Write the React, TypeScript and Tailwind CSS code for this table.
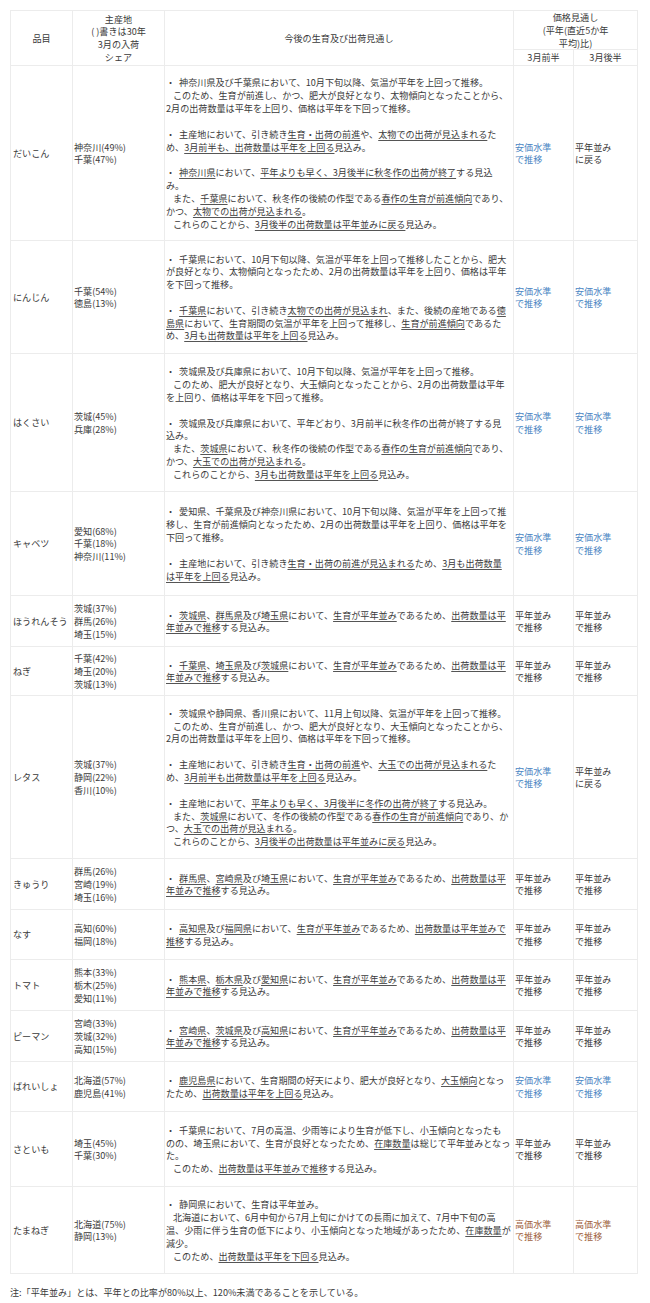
import React from "react";

type Price = "cheap" | "normal" | "back" | "high";

interface Row {
  name: string;
  height: string;
  areas: string[];
  outlook: string[];
  early: Price;
  late: Price;
}

const priceText: Record<Price, { lines: string[]; color: string }> = {
  cheap: { lines: ["安価水準", "で推移"], color: "text-[#4a86c3]" },
  normal: { lines: ["平年並み", "で推移"], color: "text-[#3a3a3a]" },
  back: { lines: ["平年並み", "に戻る"], color: "text-[#3a3a3a]" },
  high: { lines: ["高価水準", "で推移"], color: "text-[#a0623e]" },
};

// "{...}" = underlined, ">" = indented line, "" = blank line
const rows: Row[] = [
  {
    name: "だいこん",
    height: "h-[175px]",
    areas: ["神奈川(49%)", "千葉(47%)"],
    outlook: [
      "・ 神奈川県及び千葉県において、10月下旬以降、気温が平年を上回って推移。",
      ">このため、生育が前進し、かつ、肥大が良好となり、太物傾向となったことから、",
      "2月の出荷数量は平年を上回り、価格は平年を下回って推移。",
      "",
      "・ 主産地において、引き続き{生育・出荷の前進}や、{太物での出荷が見込まれる}た",
      "め、{3月前半も、出荷数量は平年を上回る}見込み。",
      "",
      "・ {神奈川県}において、{平年よりも早く、3月後半に秋冬作の出荷が終了}する見込",
      "み。",
      ">また、{千葉県}において、秋冬作の後続の作型である{春作の生育が前進傾向}であり、",
      "かつ、{太物での出荷が見込まれる}。",
      ">これらのことから、{3月後半の出荷数量は平年並みに戻る}見込み。",
    ],
    early: "cheap",
    late: "back",
  },
  {
    name: "にんじん",
    height: "h-[113px]",
    areas: ["千葉(54%)", "徳島(13%)"],
    outlook: [
      "・ 千葉県において、10月下旬以降、気温が平年を上回って推移したことから、肥大",
      "が良好となり、太物傾向となったため、2月の出荷数量は平年を上回り、価格は平年",
      "を下回って推移。",
      "",
      "・ {千葉県}において、引き続き{太物での出荷が見込まれ}、また、後続の産地である{徳}",
      "{島県}において、生育期間の気温が平年を上回って推移し、{生育が前進傾向}であるた",
      "め、{3月も出荷数量は平年を上回る}見込み。",
    ],
    early: "cheap",
    late: "cheap",
  },
  {
    name: "はくさい",
    height: "h-[138px]",
    areas: ["茨城(45%)", "兵庫(28%)"],
    outlook: [
      "・ 茨城県及び兵庫県において、10月下旬以降、気温が平年を上回って推移。",
      ">このため、肥大が良好となり、大玉傾向となったことから、2月の出荷数量は平年",
      "を上回り、価格は平年を下回って推移。",
      "",
      "・ 茨城県及び兵庫県において、平年どおり、3月前半に秋冬作の出荷が終了する見",
      "込み。",
      ">また、{茨城県}において、秋冬作の後続の作型である{春作の生育が前進傾向}であり、",
      "かつ、{大玉での出荷が見込まれる}。",
      ">これらのことから、{3月も出荷数量は平年を上回る}見込み。",
    ],
    early: "cheap",
    late: "cheap",
  },
  {
    name: "キャベツ",
    height: "h-[104px]",
    areas: ["愛知(68%)", "千葉(18%)", "神奈川(11%)"],
    outlook: [
      "・ 愛知県、千葉県及び神奈川県において、10月下旬以降、気温が平年を上回って推",
      "移し、生育が前進傾向となったため、2月の出荷数量は平年を上回り、価格は平年を",
      "下回って推移。",
      "",
      "・ 主産地において、引き続き{生育・出荷の前進が見込まれる}ため、{3月も出荷数量}",
      "{は平年を上回る}見込み。",
    ],
    early: "cheap",
    late: "cheap",
  },
  {
    name: "ほうれんそう",
    height: "h-[51px]",
    areas: ["茨城(37%)", "群馬(26%)", "埼玉(15%)"],
    outlook: [
      "・ {茨城県}、{群馬県}及び{埼玉県}において、{生育が平年並み}であるため、{出荷数量は平}",
      "{年並みで推移}する見込み。",
    ],
    early: "normal",
    late: "normal",
  },
  {
    name: "ねぎ",
    height: "h-[49px]",
    areas: ["千葉(42%)", "埼玉(20%)", "茨城(13%)"],
    outlook: [
      "・ {千葉県}、{埼玉県}及び{茨城県}において、{生育が平年並み}であるため、{出荷数量は平}",
      "{年並みで推移}する見込み。",
    ],
    early: "normal",
    late: "normal",
  },
  {
    name: "レタス",
    height: "h-[163px]",
    areas: ["茨城(37%)", "静岡(22%)", "香川(10%)"],
    outlook: [
      "・ 茨城県や静岡県、香川県において、11月上旬以降、気温が平年を上回って推移。",
      ">このため、生育が前進し、かつ、肥大が良好となり、大玉傾向となったことから、",
      "2月の出荷数量は平年を上回り、価格は平年を下回って推移。",
      "",
      "・ 主産地において、引き続き{生育・出荷の前進}や、{大玉での出荷が見込まれる}た",
      "め、{3月前半も出荷数量は平年を上回る}見込み。",
      "",
      "・ 主産地において、{平年よりも早く、3月後半に冬作の出荷が終了}する見込み。",
      ">また、{茨城県}において、冬作の後続の作型である{春作の生育が前進傾向}であり、か",
      "つ、{大玉での出荷が見込まれる}。",
      ">これらのことから、{3月後半の出荷数量は平年並みに戻る}見込み。",
    ],
    early: "cheap",
    late: "back",
  },
  {
    name: "きゅうり",
    height: "h-[51px]",
    areas: ["群馬(26%)", "宮崎(19%)", "埼玉(16%)"],
    outlook: [
      "・ {群馬県}、{宮崎県}及び{埼玉県}において、{生育が平年並み}であるため、{出荷数量は平}",
      "{年並みで推移}する見込み。",
    ],
    early: "normal",
    late: "normal",
  },
  {
    name: "なす",
    height: "h-[50px]",
    areas: ["高知(60%)", "福岡(18%)"],
    outlook: [
      "・ {高知県}及び{福岡県}において、{生育が平年並み}であるため、{出荷数量は平年並みで}",
      "{推移}する見込み。",
    ],
    early: "normal",
    late: "normal",
  },
  {
    name: "トマト",
    height: "h-[51px]",
    areas: ["熊本(33%)", "栃木(25%)", "愛知(11%)"],
    outlook: [
      "・ {熊本県}、{栃木県}及び{愛知県}において、{生育が平年並み}であるため、{出荷数量は平}",
      "{年並みで推移}する見込み。",
    ],
    early: "normal",
    late: "normal",
  },
  {
    name: "ピーマン",
    height: "h-[51px]",
    areas: ["宮崎(33%)", "茨城(32%)", "高知(15%)"],
    outlook: [
      "・ {宮崎県}、{茨城県}及び{高知県}において、{生育が平年並み}であるため、{出荷数量は平}",
      "{年並みで推移}する見込み。",
    ],
    early: "normal",
    late: "normal",
  },
  {
    name: "ばれいしょ",
    height: "h-[50px]",
    areas: ["北海道(57%)", "鹿児島(41%)"],
    outlook: [
      "・ {鹿児島県}において、生育期間の好天により、肥大が良好となり、{大玉傾向}となっ",
      "たため、{出荷数量は平年を上回る}見込み。",
    ],
    early: "cheap",
    late: "cheap",
  },
  {
    name: "さといも",
    height: "h-[75px]",
    areas: ["埼玉(45%)", "千葉(30%)"],
    outlook: [
      "・ 千葉県において、7月の高温、少雨等により生育が低下し、小玉傾向となったも",
      "のの、埼玉県において、生育が良好となったため、{在庫数量}は総じて平年並みとなっ",
      "た。",
      ">このため、{出荷数量は平年並みで推移}する見込み。",
    ],
    early: "normal",
    late: "normal",
  },
  {
    name: "たまねぎ",
    height: "h-[87px]",
    areas: ["北海道(75%)", "静岡(13%)"],
    outlook: [
      "・ 静岡県において、生育は平年並み。",
      ">北海道において、6月中旬から7月上旬にかけての長雨に加えて、7月中下旬の高",
      "温、少雨に伴う生育の低下により、小玉傾向となった地域があったため、{在庫数量}が",
      "減少。",
      ">このため、{出荷数量は平年を下回る}見込み。",
    ],
    early: "high",
    late: "high",
  },
];

const Marked = ({ text }: { text: string }) => {
  const parts = text.split(/(\{[^}]*\})/).filter((p) => p !== "");
  return (
    <>
      {parts.map((p, i) =>
        p.startsWith("{") ? (
          <span key={i} className="underline decoration-[#555] underline-offset-[2px]">
            {p.slice(1, -1)}
          </span>
        ) : (
          <span key={i}>{p}</span>
        )
      )}
    </>
  );
};

const OutlookLine = ({ line }: { line: string }) => {
  if (line === "") return <div className="h-[13px]" />;
  if (line.startsWith(">")) {
    return (
      <div className="whitespace-nowrap pl-[7px]">
        <Marked text={line.slice(1)} />
      </div>
    );
  }
  if (line.startsWith("・ ")) {
    return (
      <div className="whitespace-nowrap">
        <span className="mr-[4px]">・</span>
        <Marked text={line.slice(2)} />
      </div>
    );
  }
  return (
    <div className="whitespace-nowrap">
      <Marked text={line} />
    </div>
  );
};

const cell = "border border-[#ececec] align-middle";

export default function App() {
  return (
    <div
      className="bg-white px-[10px] pt-[10px] pb-[8px] text-[9.1px] leading-[12.8px] text-[#3a3a3a]"
      style={{ fontFamily: '"Noto Sans CJK JP", "Noto Sans", sans-serif' }}
    >
      <table className="w-[627px] table-fixed border-collapse">
        <colgroup>
          <col className="w-[62px]" />
          <col className="w-[92px]" />
          <col className="w-[349px]" />
          <col className="w-[60px]" />
          <col className="w-[64px]" />
        </colgroup>
        <thead>
          <tr className="h-[36px]">
            <th rowSpan={2} className={`${cell} text-center font-normal`}>
              品目
            </th>
            <th rowSpan={2} className={`${cell} text-center font-normal`}>
              <div>主産地</div>
              <div>( )書きは30年</div>
              <div>3月の入荷</div>
              <div>シェア</div>
            </th>
            <th rowSpan={2} className={`${cell} text-center font-normal`}>
              今後の生育及び出荷見通し
            </th>
            <th colSpan={2} className={`${cell} text-center font-normal`}>
              <div>価格見通し</div>
              <div>(平年(直近5か年</div>
              <div>平均)比)</div>
            </th>
          </tr>
          <tr className="h-[16px]">
            <th className={`${cell} text-center font-normal`}>3月前半</th>
            <th className={`${cell} text-center font-normal`}>3月後半</th>
          </tr>
        </thead>
        <tbody>
          {rows.map((r) => (
            <tr key={r.name} className={r.height}>
              <td className={`${cell} pl-[2px] whitespace-nowrap`}>{r.name}</td>
              <td className={`${cell} pl-[1px]`}>
                {r.areas.map((a) => (
                  <div key={a}>{a}</div>
                ))}
              </td>
              <td className={`${cell} pl-[1px]`}>
                {r.outlook.map((l, i) => (
                  <OutlookLine key={i} line={l} />
                ))}
              </td>
              {[r.early, r.late].map((p, i) => (
                <td key={i} className={`${cell} pl-[1px] ${priceText[p].color}`}>
                  {priceText[p].lines.map((t) => (
                    <div key={t}>{t}</div>
                  ))}
                </td>
              ))}
            </tr>
          ))}
        </tbody>
      </table>
      <p className="mt-[12px]">注:「平年並み」とは、平年との比率が80%以上、120%未満であることを示している。</p>
    </div>
  );
}
